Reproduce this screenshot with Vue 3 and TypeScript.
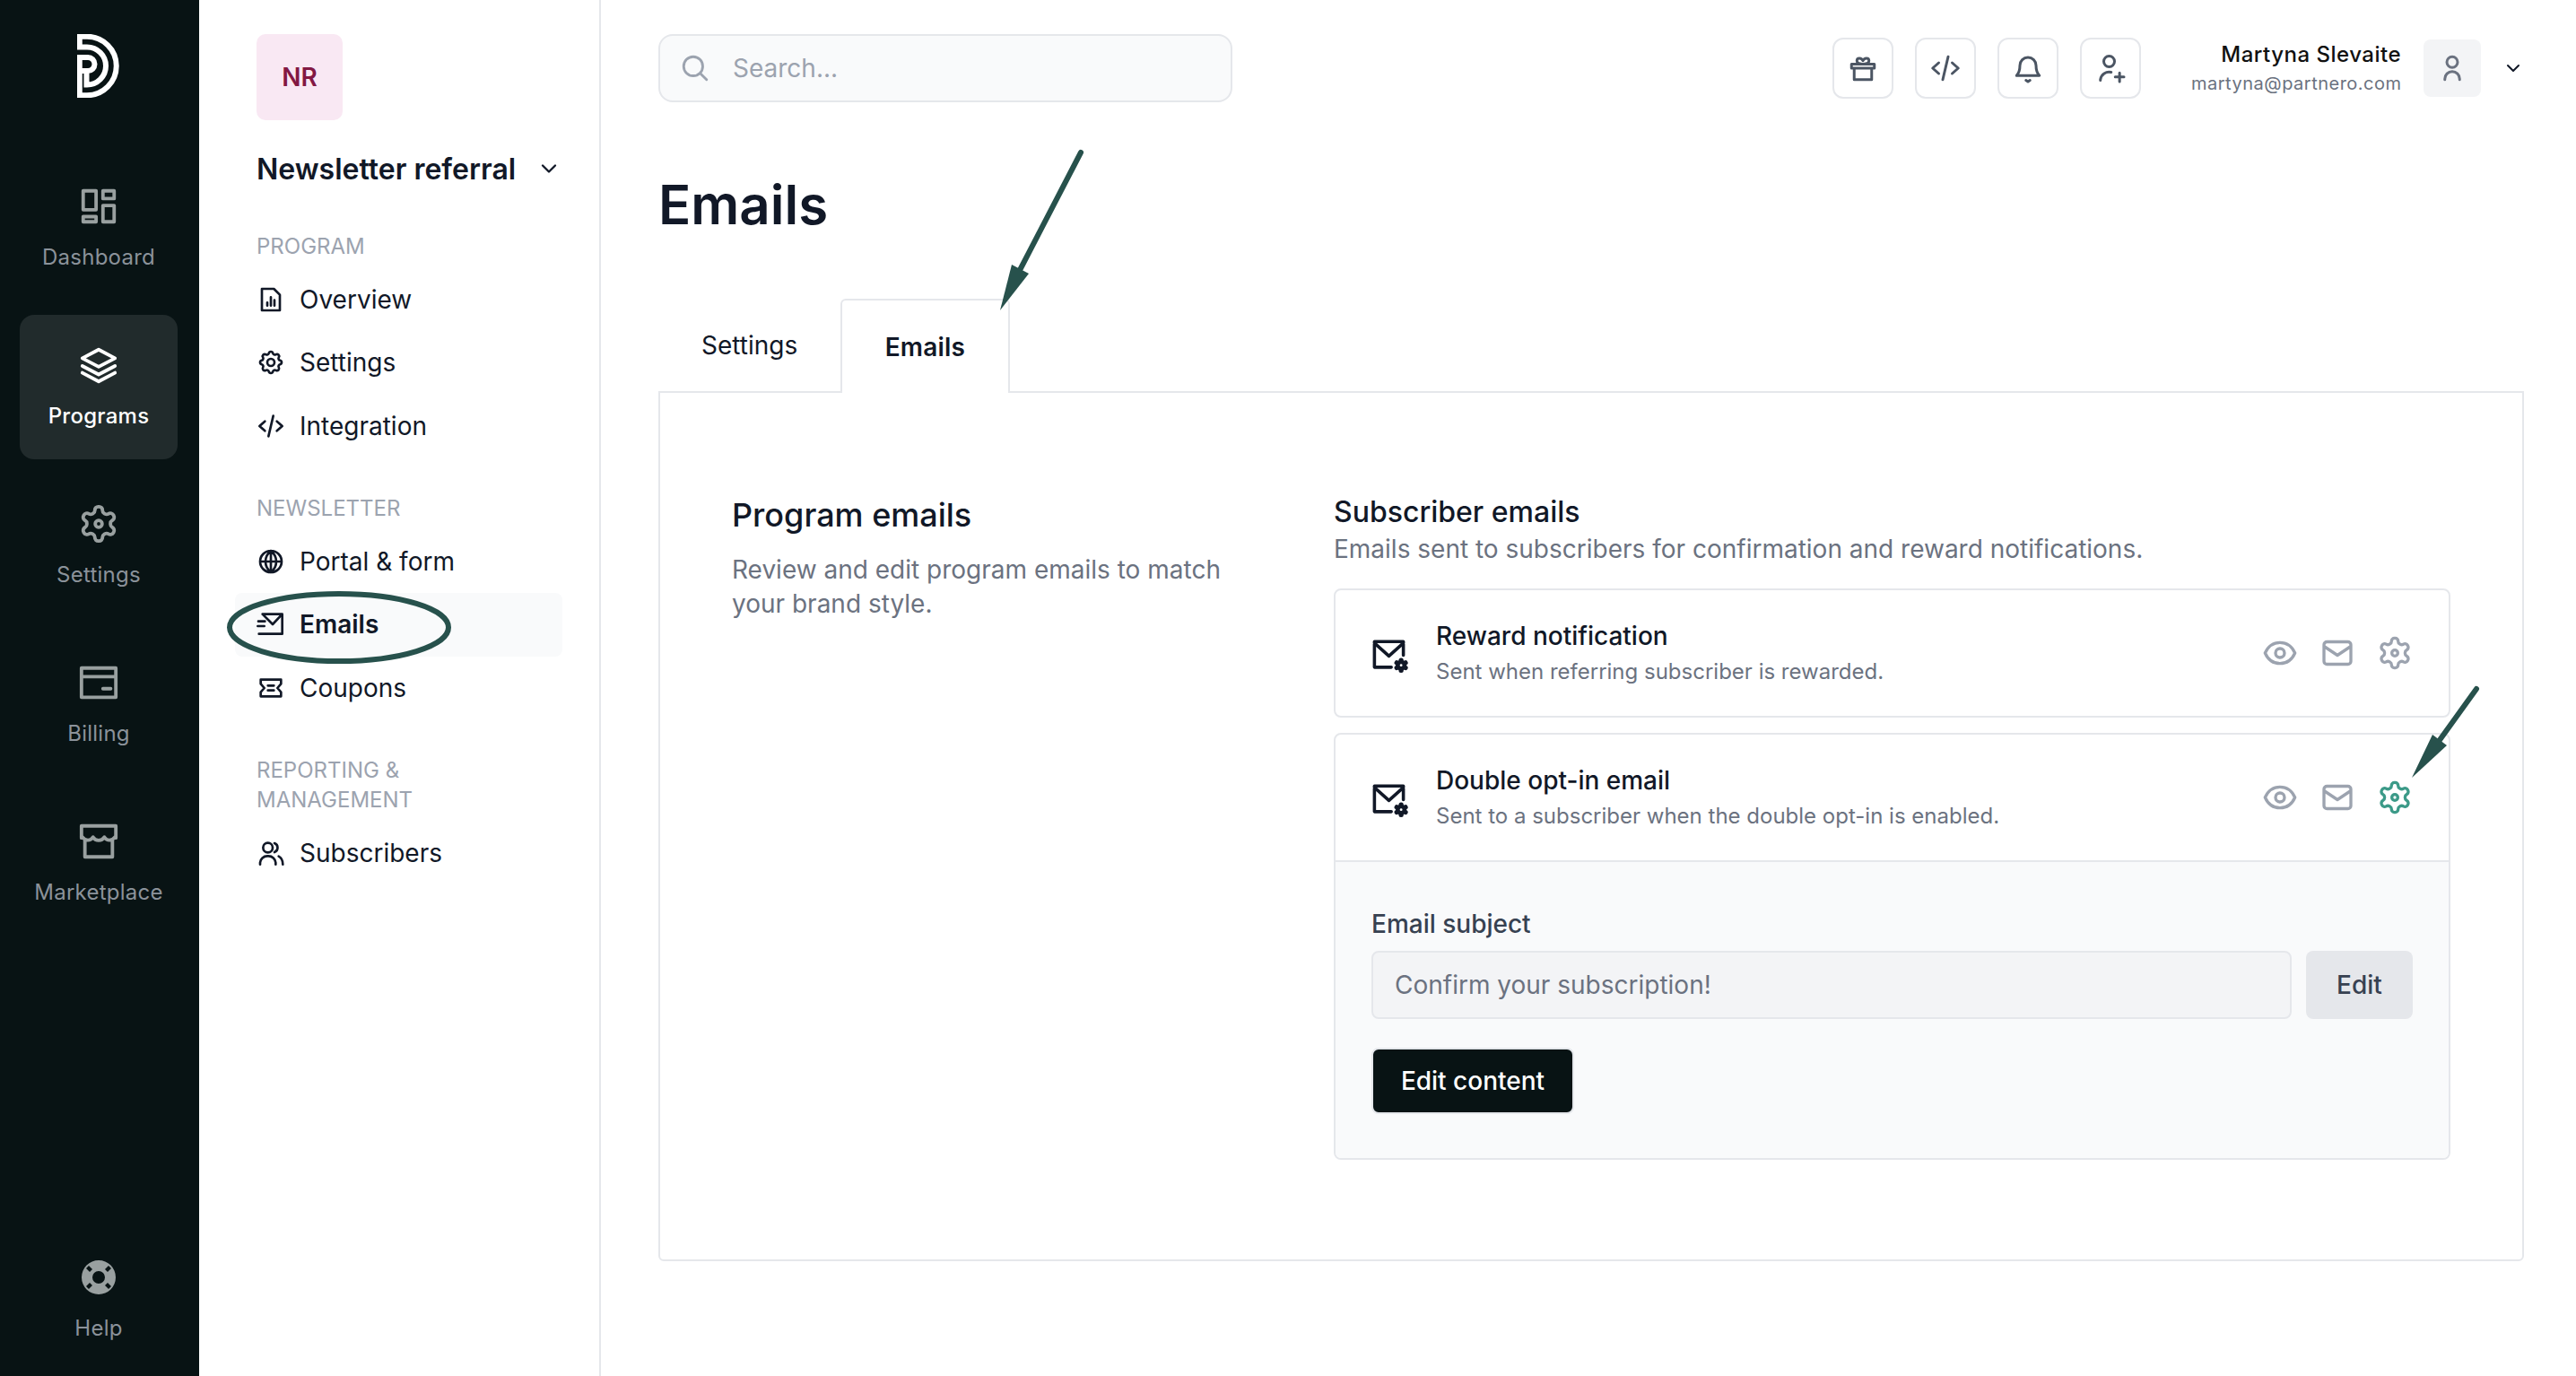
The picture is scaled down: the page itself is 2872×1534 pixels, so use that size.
<template>
  <div class="page">
    <aside class="rail">
      <svg class="logo" viewBox="0 0 47 71">
        <path d="M0 2.75H11A32.75 32.75 0 0 1 11 68.25H2.75V27M2.75 0V16.5M0 14.5H11A21 21 0 0 1 11 56.5H10.5V42M0 26H12A7.5 7.5 0 0 1 12 41H3" />
      </svg>
      <a
        v-for="item in railItems"
        :key="item.label"
        class="rail-item"
        :class="{ active: item.active, help: item.label === 'Help' }"
      >
        <svg v-if="item.label === 'Help'" class="rail-icon" viewBox="0 0 46 46">
          <path class="buoy" fill-rule="evenodd" d="M23 4a19 19 0 1 0 0 38a19 19 0 0 0 0-38zM23 16a7 7 0 1 1 0 14a7 7 0 0 1 0-14zM12 10l4 4l-3 3l-4-4zM34 10l3 3l-4 4l-3-3zM12 36l-3-3l4-4l3 3zM34 36l-4-4l3-3l4 4z" />
        </svg>
        <svg v-else class="rail-icon" viewBox="0 0 24 24">
          <path :d="icons[item.icon]" />
        </svg>
        <span>{{ item.label }}</span>
      </a>
    </aside>

    <nav class="sub">
      <div class="sub-head">
        <div class="tile">NR</div>
        <div class="program-name">
          <span>Newsletter referral</span>
          <svg class="chev" viewBox="0 0 24 24"><path :d="icons.chevron" /></svg>
        </div>
      </div>
      <section v-for="group in navGroups" :key="group.title" class="nav-group">
        <h4>{{ group.title }}</h4>
        <a
          v-for="link in group.links"
          :key="link.label"
          class="nav-link"
          :class="{ current: link.label === 'Emails' }"
        >
          <svg viewBox="0 0 24 24"><path :d="icons[link.icon]" /></svg>
          <span>{{ link.label }}</span>
        </a>
      </section>
    </nav>

    <main class="main">
      <header class="topbar">
        <label class="search">
          <svg viewBox="0 0 24 24"><path :d="icons.search" /></svg>
          <input type="text" placeholder="Search..." />
        </label>
        <div class="tools">
          <button v-for="t in toolIcons" :key="t" class="tool">
            <svg viewBox="0 0 24 24"><path :d="icons[t]" /></svg>
          </button>
        </div>
        <div class="who">
          <div class="who-name">Martyna Slevaite</div>
          <div class="who-mail">martyna@partnero.com</div>
        </div>
        <div class="avatar">
          <svg viewBox="0 0 24 24"><path :d="icons.user" /></svg>
        </div>
        <svg class="who-chev" viewBox="0 0 24 24"><path :d="icons.chevron" /></svg>
      </header>

      <h1>Emails</h1>

      <div class="tabs">
        <a class="tab">Settings</a>
        <a class="tab on">Emails</a>
      </div>

      <div class="panel">
        <div class="intro">
          <h2>Program emails</h2>
          <p>Review and edit program emails to match your brand style.</p>
        </div>
        <div class="subscriber">
          <h3>Subscriber emails</h3>
          <p class="lead">Emails sent to subscribers for confirmation and reward notifications.</p>

          <div v-for="mail in mails" :key="mail.title" class="card">
            <div class="card-head">
              <svg class="mail-gear" viewBox="0 0 24 24">
                <path d="M21 12.5V4H3v16h10.5M3 5l9 8l9-8" />
                <path class="mini" :d="icons.gearOuter" transform="translate(14.8 14) scale(.4)" />
                <circle cx="19.6" cy="18.8" r=".8" fill="#fff" />
              </svg>
              <div class="card-text">
                <div class="card-title">{{ mail.title }}</div>
                <div class="card-sub">{{ mail.text }}</div>
              </div>
              <div class="actions">
                <svg viewBox="0 0 24 24"><path :d="icons.eye" /></svg>
                <svg viewBox="0 0 24 24"><path :d="icons.mail" /></svg>
                <svg viewBox="0 0 24 24" :class="{ teal: mail.open }"><path :d="icons.gear" /></svg>
              </div>
            </div>
            <div v-if="mail.open" class="card-body">
              <div class="field-label">Email subject</div>
              <div class="field-row">
                <input type="text" value="Confirm your subscription!" readonly />
                <button class="edit">Edit</button>
              </div>
              <button class="primary">Edit content</button>
            </div>
          </div>
        </div>
      </div>
    </main>

    <!-- hand drawn annotations on top of the screenshot -->
    <svg class="marks" viewBox="0 0 2872 1534">
      <ellipse cx="378" cy="699.5" rx="122" ry="37.5" />
      <path d="M1205 170L1135 305" />
      <polygon points="1115,346 1128,295 1147,305" />
      <path d="M2761 768L2720 825" />
      <polygon points="2689,867 2712,819 2728,831" />
    </svg>
  </div>
</template>

<script setup lang="ts">
const gearOuter = 'M12.22 2h-.44a2 2 0 0 0-2 2v.18a2 2 0 0 1-1 1.73l-.43.25a2 2 0 0 1-2 0l-.15-.08a2 2 0 0 0-2.73.73l-.22.38a2 2 0 0 0 .73 2.73l.15.1a2 2 0 0 1 1 1.72v.51a2 2 0 0 1-1 1.74l-.15.09a2 2 0 0 0-.73 2.73l.22.38a2 2 0 0 0 2.73.73l.15-.08a2 2 0 0 1 2 0l.43.25a2 2 0 0 1 1 1.73V20a2 2 0 0 0 2 2h.44a2 2 0 0 0 2-2v-.18a2 2 0 0 1 1-1.73l.43-.25a2 2 0 0 1 2 0l.15.08a2 2 0 0 0 2.73-.73l.22-.39a2 2 0 0 0-.73-2.73l-.15-.08a2 2 0 0 1-1-1.74v-.5a2 2 0 0 1 1-1.74l.15-.09a2 2 0 0 0 .73-2.73l-.22-.38a2 2 0 0 0-2.73-.73l-.15.08a2 2 0 0 1-2 0l-.43-.25a2 2 0 0 1-1-1.73V4a2 2 0 0 0-2-2z'

const icons: Record<string, string> = {
  dashboard: 'M3 3h7.500v11H3zM14.500 3H21v4.500h-6.500zM3 18H10.500v3H3zM14.500 11.500H21V21h-6.500z',
  layers: 'M12 3l9.500 5l-9.500 5l-9.500-5zM2.500 12.500l9.500 5l9.500-5M2.500 16.500l9.500 5l9.500-5',
  gearOuter,
  gear: gearOuter + 'M10 12a2 2 0 1 0 4 0a2 2 0 0 0-4 0z',
  card: 'M2 3.500h20v17H2zM2 8.500h20M14.500 15.500H19',
  store: 'M2 3h20v7M2 3v7M2 9c2.500 3 5 3 6.700 .500c1.500 2.500 5.100 2.500 6.600 0C17 12 19.500 12 22 9M4 11v10h16V11',
  gear8: 'M10.325 4.317c.426-1.756 2.924-1.756 3.35 0a1.724 1.724 0 0 0 2.573 1.066c1.543-.94 3.31 .826 2.37 2.37a1.724 1.724 0 0 0 1.065 2.572c1.756 .426 1.756 2.924 0 3.35a1.724 1.724 0 0 0-1.066 2.573c.94 1.543-.826 3.31-2.37 2.37a1.724 1.724 0 0 0-2.572 1.065c-.426 1.756-2.924 1.756-3.35 0a1.724 1.724 0 0 0-2.573-1.066c-1.543 .94-3.31-.826-2.37-2.37a1.724 1.724 0 0 0-1.065-2.572c-1.756-.426-1.756-2.924 0-3.35a1.724 1.724 0 0 0 1.066-2.573c-.94-1.543 .826-3.31 2.37-2.37c1 .608 2.296 .07 2.572-1.065zM9 12a3 3 0 1 0 6 0a3 3 0 0 0-6 0z',
  report: 'M4.500 3h10l5 5v13h-15zM9 17v-2.500M12 17v-7M15 17v-4.500',
  code: 'M7 8l-4.500 4l4.500 4M17 8l4.500 4l-4.500 4M14 3.500l-4 17',
  globe: 'M3 12a9 9 0 1 0 18 0a9 9 0 0 0-18 0zM3 12h18M12 3v18M12 3c-3 2.500-4.500 5.500-4.500 9s1.500 6.500 4.500 9c3-2.500 4.500-5.500 4.500-9s-1.500-6.500-4.500-9z',
  send: 'M5 3.500H21.500V20H2M5 3.500l8.500 8.500l8-8.500M1.500 9.500h5.500M1 13.500h5.500',
  coupon: 'M3.500 5h17v3.500L17.500 12l3 3.500V19h-17v-3.500l3-3.500l-3-3.500zM9.500 10h5M9.500 14h5',
  users: 'M9.500 3.500a4 4 0 1 0 0 8a4 4 0 0 0 0-8zM3 21.500v-1.500a6 6 0 0 1 6-5.500h1a6 6 0 0 1 6 5.500v1.500M15 3.800a4 4 0 0 1 0 7.500M22 21.500c0-3-1-5.500-3.500-6.800',
  chevron: 'M6 9l6 6l6-6',
  search: 'M10.500 3a7.500 7.500 0 1 0 0 15a7.500 7.500 0 0 0 0-15zM21 21l-5.200-5.200',
  gift: 'M3.500 9h17v3h-17zM5.500 12v8.500h13V12M12 9c-1-.2-4.500 0-4.500-2.500c0-2.500 3.500-2.500 4.500 0c1-2.500 4.500-2.500 4.500 0C16.500 9 13 8.800 12 9z',
  bell: 'M6 10a6 6 0 0 1 12 0c0 4 .5 5.500 2.500 7.500h-17C5.500 15.500 6 14 6 10zM10.500 21l1.500 1l1.500-1',
  'user-plus': 'M11 3a4 4 0 1 0 0 8a4 4 0 0 0 0-8zM4.500 21v-.500a6.500 6.500 0 0 1 8-5.500M15.500 18.500h6.500M18.750 15.500v6.500',
  user: 'M12 3.500a4 4 0 1 0 0 8a4 4 0 0 0 0-8zM6.500 20.500v-.500a5.500 5.500 0 0 1 11 0v.500',
  eye: 'M2 12c2-4.500 5.500-7 10-7s8 2.500 10 7c-2 4.500-5.500 7-10 7s-8-2.500-10-7zM9 12a3 3 0 1 0 6 0a3 3 0 0 0-6 0z',
  mail: 'M5 4.500h14a2 2 0 0 1 2 2v11a2 2 0 0 1-2 2H5a2 2 0 0 1-2-2v-11a2 2 0 0 1 2-2zM3 7.500l9 6l9-6',
}

const railItems = [
  { label: 'Dashboard', icon: 'dashboard' },
  { label: 'Programs', icon: 'layers', active: true },
  { label: 'Settings', icon: 'gear' },
  { label: 'Billing', icon: 'card' },
  { label: 'Marketplace', icon: 'store' },
  { label: 'Help', icon: '' },
]

const navGroups = [
  {
    title: 'PROGRAM',
    links: [
      { label: 'Overview', icon: 'report' },
      { label: 'Settings', icon: 'gear8' },
      { label: 'Integration', icon: 'code' },
    ],
  },
  {
    title: 'NEWSLETTER',
    links: [
      { label: 'Portal & form', icon: 'globe' },
      { label: 'Emails', icon: 'send' },
      { label: 'Coupons', icon: 'coupon' },
    ],
  },
  {
    title: 'REPORTING & MANAGEMENT',
    links: [{ label: 'Subscribers', icon: 'users' }],
  },
]

const toolIcons = ['gift', 'code', 'bell', 'user-plus']

const mails = [
  { title: 'Reward notification', text: 'Sent when referring subscriber is rewarded.', open: false },
  { title: 'Double opt-in email', text: 'Sent to a subscriber when the double opt-in is enabled.', open: true },
]
</script>

<style>
html,
body {
  margin: 0;
  background: #fff;
}
</style>

<style scoped>
* {
  box-sizing: border-box;
}

svg path {
  fill: none;
  stroke: currentColor;
  stroke-width: 2;
  stroke-linecap: round;
  stroke-linejoin: round;
}

.page {
  position: relative;
  display: flex;
  width: 2872px;
  height: 1534px;
  overflow: hidden;
  font-family: Inter, 'Noto Sans', sans-serif;
  color: #111827;
  background: #fff;
}

/* left rail */
.rail {
  flex: none;
  display: flex;
  flex-direction: column;
  gap: 16px;
  width: 222px;
  padding: 38px 24px 5px 22px;
  background: #081314;
}

.logo {
  flex: none;
  display: block;
  width: 47px;
  height: 71px;
  margin: 0 auto 49px 64px;
  color: #fff;
}

.logo path {
  stroke-width: 6;
  stroke-linecap: butt;
  stroke-linejoin: miter;
}

.rail-item {
  flex: none;
  display: flex;
  flex-direction: column;
  align-items: center;
  gap: 18px;
  height: 161px;
  padding-top: 33px;
  border-radius: 16px;
  font-size: 24px;
  line-height: 32px;
  letter-spacing: 0.25px;
  color: #8b929a;
}

.rail-item.active {
  background: #212b2c;
  color: #fff;
  font-weight: 500;
}

.rail-item.help {
  margin-top: auto;
}

.rail-icon {
  width: 46px;
  height: 46px;
  color: #99a0a0;
}

.active .rail-icon {
  color: #fff;
}

.buoy {
  fill: #99a0a0;
  stroke: none;
}

/* program sidebar */
.sub {
  flex: none;
  width: 448px;
  padding: 38px 41px 0 40px;
  border-right: 2px solid #e5e7eb;
}

.sub-head {
  padding-left: 24px;
}

.tile {
  display: flex;
  align-items: center;
  justify-content: center;
  width: 96px;
  height: 96px;
  border-radius: 10px;
  background: #f9e8f3;
  color: #831843;
  font-size: 28px;
  font-weight: 600;
}

.program-name {
  display: flex;
  align-items: center;
  justify-content: space-between;
  width: 340px;
  height: 44px;
  margin-top: 32px;
  font-size: 32px;
  font-weight: 600;
}

.chev {
  width: 28px;
  height: 28px;
}

.nav-group {
  margin-top: 40px;
}

.sub-head + .nav-group {
  margin-top: 48px;
}

.nav-group h4 {
  margin: 0 0 7.500px;
  padding: 0 100px 0 24px;
  font-size: 24px;
  line-height: 33px;
  font-weight: 400;
  color: #9ca3af;
}

.nav-link {
  display: flex;
  align-items: center;
  gap: 16px;
  height: 70.500px;
  padding-left: 24px;
  border-radius: 8px;
  font-size: 28px;
}

.nav-link svg {
  width: 32px;
  height: 32px;
}

.nav-link.current {
  background: #f9fafb;
  font-weight: 600;
}

/* main */
.main {
  flex: 1;
  min-width: 0;
  padding: 38px 58px 0 64px;
}

.topbar {
  display: flex;
  align-items: center;
  height: 76px;
}

.search {
  display: flex;
  align-items: center;
  gap: 23px;
  width: 640px;
  height: 76px;
  padding-left: 22px;
  border: 2px solid #e5e7eb;
  border-radius: 16px;
  background: #f9fafb;
  color: #9ca3af;
}

.search svg {
  width: 34px;
  height: 34px;
}

.search input {
  flex: 1;
  border: 0;
  outline: 0;
  background: none;
  font: 400 28px Inter, sans-serif;
}

.search input::placeholder {
  color: #9ca3af;
}

.tools {
  display: flex;
  gap: 24px;
  margin-left: auto;
}

.tool {
  display: flex;
  align-items: center;
  justify-content: center;
  width: 68px;
  height: 68px;
  padding: 0;
  border: 2px solid #e5e7eb;
  border-radius: 12px;
  background: #fff;
  color: #4b5563;
}

.tool svg {
  width: 36px;
  height: 36px;
}

.who {
  width: 234px;
  margin-left: 56px;
  text-align: right;
}

.who-name {
  font-size: 24px;
  line-height: 34px;
  font-weight: 500;
  letter-spacing: 0.5px;
  color: #111;
}

.who-mail {
  font-size: 20px;
  line-height: 30px;
  letter-spacing: 0.5px;
  color: #6b7280;
}

.avatar {
  display: flex;
  align-items: center;
  justify-content: center;
  width: 64px;
  height: 64px;
  margin-left: 25px;
  border-radius: 8px;
  background: #f3f4f6;
  color: #6b7280;
}

.avatar svg {
  width: 36px;
  height: 36px;
}

.who-chev {
  width: 24px;
  height: 24px;
  margin-left: 24px;
  color: #111827;
}

h1 {
  margin: 78px 0 0;
  font-size: 60px;
  line-height: 72px;
  font-weight: 600;
}

.tabs {
  display: flex;
  align-items: flex-end;
  height: 105px;
  margin-top: 69px;
  margin-bottom: -2px;
  font-size: 28px;
}

.tab {
  display: flex;
  align-items: center;
  height: 105px;
  padding: 0 46px 4px;
  border: 2px solid transparent;
  border-bottom: 0;
}

.tab.on {
  position: relative;
  z-index: 1;
  padding: 1px 47.500px 0;
  border-color: #e5e7eb;
  border-radius: 6px 6px 0 0;
  background: #fff;
  font-weight: 600;
  letter-spacing: 0.2px;
}

.panel {
  display: grid;
  grid-template-columns: 590px 1245px;
  gap: 81px;
  height: 970px;
  padding: 112px 80px 0;
  border: 2px solid #e5e7eb;
  border-radius: 0 0 6px 6px;
}

h2 {
  margin: 0;
  font-size: 36px;
  line-height: 48px;
  font-weight: 500;
}

.intro p {
  margin: 18px 0 0;
  font-size: 28px;
  line-height: 38px;
  color: #6b7280;
}

h3 {
  margin: 0;
  font-size: 32px;
  line-height: 42px;
  font-weight: 500;
}

.lead {
  margin: 0 0 24px;
  font-size: 28px;
  line-height: 40px;
  color: #6b7280;
}

.card {
  border: 2px solid #e5e7eb;
  border-radius: 8px;
  overflow: hidden;
}

.card + .card {
  margin-top: 17px;
}

.card-head {
  display: flex;
  align-items: center;
  height: 140px;
  padding: 2px 40px 0 38px;
}

.mail-gear {
  flex: none;
  width: 43px;
  height: 43px;
  margin-right: 31px;
}

.mail-gear .mini {
  fill: #111827;
  stroke-width: 3;
}

.card-text {
  flex: 1;
}

.card-title {
  font-size: 28px;
  line-height: 40px;
  font-weight: 500;
}

.card-sub {
  font-size: 24px;
  line-height: 40px;
  color: #6b7280;
}

.actions {
  display: flex;
  gap: 24px;
  margin-top: -2px;
  color: #9ca3af;
}

.actions svg {
  width: 40px;
  height: 40px;
}

.actions .teal {
  color: #3c9a88;
}

.card-body {
  padding: 49px 40px;
  border-top: 2px solid #e5e7eb;
  background: #f9fafb;
}

.field-label {
  font-size: 28px;
  line-height: 40px;
  font-weight: 500;
  color: #374151;
}

.field-row {
  display: flex;
  gap: 16px;
  margin-top: 10px;
}

.field-row input {
  flex: 1;
  height: 76px;
  padding: 0 24px;
  border: 2px solid #e5e7eb;
  border-radius: 8px;
  outline: 0;
  background: #f3f4f6;
  color: #6b7280;
  font: 400 28px Inter, sans-serif;
}

.edit {
  width: 119px;
  height: 76px;
  border: 0;
  border-radius: 8px;
  background: #e5e7eb;
  color: #374151;
  font: 500 28px Inter, sans-serif;
}

.primary {
  display: block;
  width: 226px;
  height: 74px;
  margin-top: 32px;
  padding: 0;
  border: 2px solid #e5e7eb;
  border-radius: 8px;
  background: #081314;
  color: #fff;
  font: 500 28px Inter, sans-serif;
}

/* annotation overlay */
.marks {
  position: absolute;
  top: 0;
  left: 0;
  z-index: 2;
  width: 2872px;
  height: 1534px;
  pointer-events: none;
}

.marks ellipse {
  fill: none;
  stroke: #27514c;
  stroke-width: 6;
}

.marks path {
  stroke: #27514c;
  stroke-width: 6;
}

.marks polygon {
  fill: #27514c;
}
</style>
